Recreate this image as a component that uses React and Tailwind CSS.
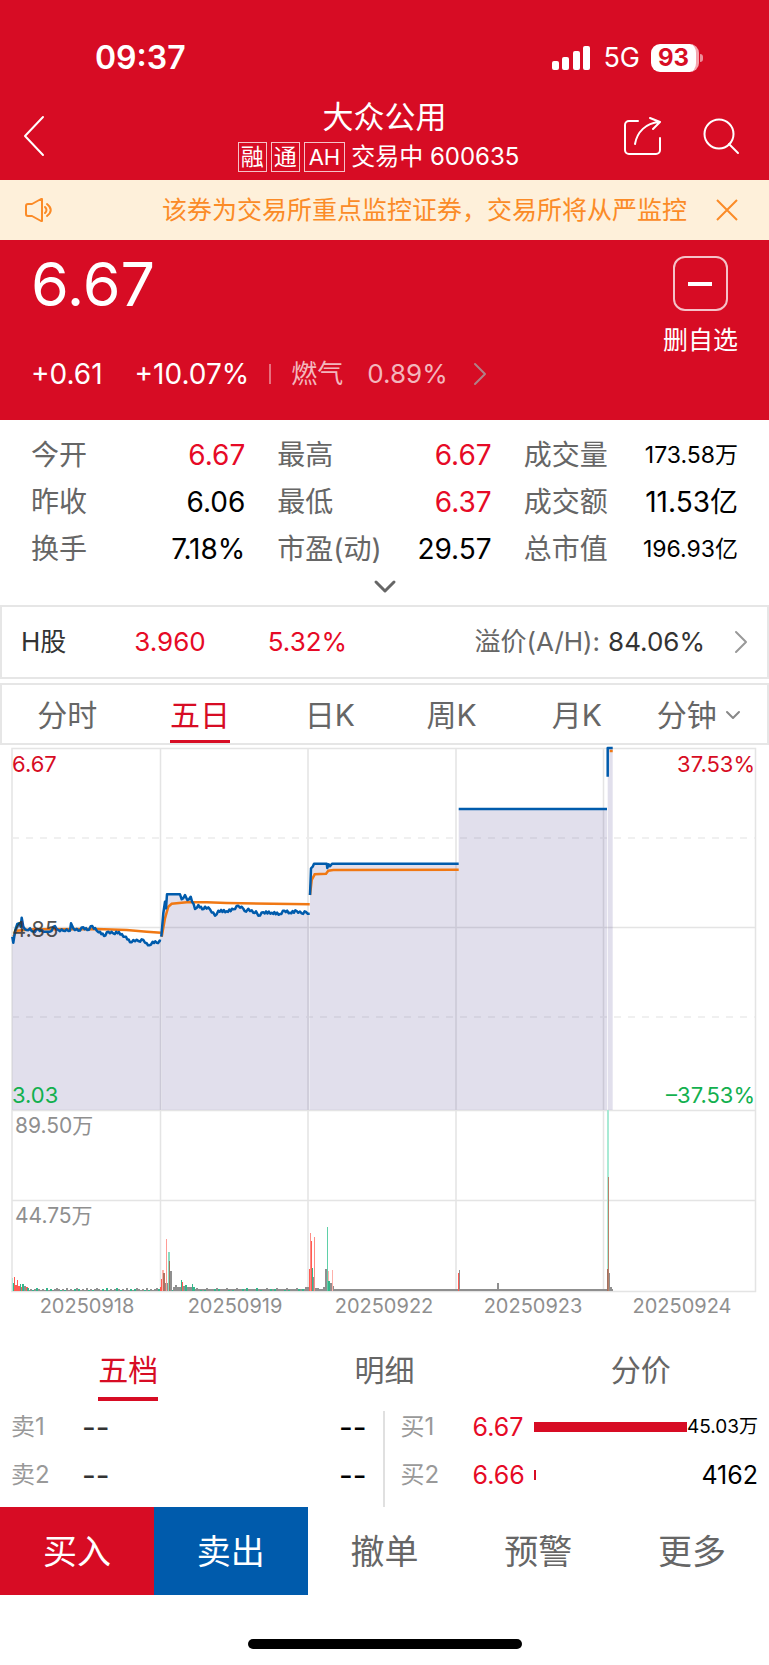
import React, { useState } from "react";

const stats = [
  { label: "今开", value: "6.67", up: true },
  { label: "最高", value: "6.67", up: true },
  { label: "成交量", value: "173.58万", small: true },
  { label: "昨收", value: "6.06" },
  { label: "最低", value: "6.37", up: true },
  { label: "成交额", value: "11.53亿" },
  { label: "换手", value: "7.18%" },
  { label: "市盈(动)", value: "29.57" },
  { label: "总市值", value: "196.93亿", small: true },
];

const periods = ["分时", "五日", "日K", "周K", "月K", "分钟"];
const bookTabs = ["五档", "明细", "分价"];

const asks = [
  { name: "卖1", price: "--", amount: "--" },
  { name: "卖2", price: "--", amount: "--" },
];

const bids = [
  { name: "买1", price: "6.67", amount: "45.03万", percent: 100, small: true },
  { name: "买2", price: "6.66", amount: "4162", percent: 1 },
];

const actions = [
  { name: "买入", style: "bg-[#d70c24] text-white" },
  { name: "卖出", style: "bg-[#005bac] text-white" },
  { name: "撤单", style: "bg-white text-[#666]" },
  { name: "预警", style: "bg-white text-[#666]" },
  { name: "更多", style: "bg-white text-[#666]" },
];

const dates = [
  { x: 87, label: "20250918" },
  { x: 235, label: "20250919" },
  { x: 384, label: "20250922" },
  { x: 533, label: "20250923" },
  { x: 682, label: "20250924" },
];

// one line per trading day, in thirds of a chart unit
const priceDays = [
  [[37, 590], [40, 608], [46, 570], [52, 552], [58, 550], [62, 560], [65, 533], [70, 560], [80, 570], [90, 565], [100, 575], [115, 568], [130, 575], [150, 575], [165, 558], [175, 570], [190, 572], [200, 568], [210, 572], [213, 550], [220, 565], [235, 572], [250, 562], [262, 570], [277, 558], [290, 572], [300, 575], [312, 588], [325, 575], [340, 580], [357, 576], [370, 590], [378, 590], [390, 607], [400, 600], [415, 603], [430, 600], [440, 610], [448, 616], [458, 605], [470, 608], [483, 603]],
  [[484, 590], [490, 520], [495, 485], [498, 505], [501, 463], [540, 463], [545, 478], [555, 465], [562, 480], [572, 470], [585, 507], [595, 495], [607, 508], [615, 500], [630, 508], [645, 527], [655, 512], [680, 514], [700, 508], [715, 497], [730, 506], [738, 515], [745, 506], [760, 518], [768, 514], [775, 527], [790, 517], [815, 518], [840, 522], [853, 512], [870, 518], [890, 513], [905, 520], [918, 516], [929, 521]],
  [[930, 465], [933, 385], [938, 380], [942, 371], [980, 371], [982, 384], [986, 373], [990, 379], [996, 371], [1376, 371]],
  [[1376, 207], [1821, 207]],
  [[1823, 110], [1823, 24], [1838, 24]],
];

const averageDays = [
  [[40, 590], [50, 572], [100, 568], [290, 567], [380, 570], [440, 575], [483, 578]],
  [[485, 590], [495, 535], [505, 500], [515, 491], [560, 487], [620, 487], [680, 489], [929, 493]],
  [[930, 465], [935, 420], [944, 403], [978, 401], [985, 392], [1000, 390], [1376, 389]],
  [[1829, 33], [1838, 33]],
];

const RED = "#ff5a52";
const GREEN = "#35b58a";
const GRAY = "#8f8f8f";
const PINK = "#ffb0aa";
const MINT = "#a9ead5";

// [x, height, width, colour]
const spikes = [
  [12, 13, 1, MINT], [13, 8, 1, GREEN], [14, 14, 1, RED], [15, 6, 2, RED], [17, 11, 1, RED], [18, 5, 2, RED], [20, 7, 1, GREEN], [21, 4, 2, RED], [22, 7, 2, GREEN], [24, 5, 2, GRAY], [26, 4, 2, RED], [27, 3, 2, GREEN],
  [160, 4, 2, RED], [161, 12, 2, RED], [162, 21, 2, PINK], [163, 18, 2, "#b0705f"], [165, 8, 2, GRAY], [166, 52, 1, "#ff9c96"], [167, 8, 2, GRAY], [168, 39, 2, "#8adcc1"], [169, 30, 1, "#a0705f"], [170, 20, 2, GRAY], [173, 4, 8, GRAY], [175, 6, 2, GRAY], [181, 11, 1, GREEN], [182, 9, 1, RED], [183, 5, 3, GRAY], [185, 6, 2, GREEN], [187, 4, 5, GRAY], [192, 7, 1, GREEN], [193, 4, 2, GREEN],
  [305, 4, 4, GRAY], [309, 22, 2, RED], [310, 58, 1, "#ff8c86"], [311, 50, 1, RED], [312, 23, 1, GREEN], [313, 14, 1, GRAY], [314, 54, 1, "#ff8c86"], [315, 3, 4, GRAY], [323, 4, 3, GRAY], [325, 22, 2, GRAY], [327, 64, 1, "#5fd0a8"], [328, 20, 1, PINK], [328, 10, 2, GREEN], [330, 8, 2, GRAY], [331, 5, 3, GRAY], [332, 21, 1, PINK],
  [458, 18, 1, RED], [459, 21, 1, GRAY], [497, 8, 2, GRAY],
  [607, 181, 2, MINT], [607, 22, 1, "#a07060"], [608, 114, 1, "#b98068"], [609, 18, 1, GRAY], [610, 4, 2, GRAY], [611, 2, 2, GRAY],
];

const quietVolume = Array.from({ length: 145 }, (_, i) => {
  const tones = [GRAY, RED, GREEN, GRAY, GREEN, GRAY, GRAY];
  return [16 + i * 2, 1 + ((i * 7) % 5 === 0 ? 2 : (i * 3) % 2), 2, tones[(i * i + i * 3) % 7]];
});

const line = (points) =>
  points.map(([x, y]) => `${(x / 3).toFixed(1)},${(y / 3 - 6).toFixed(1)}`).join(" ");

const wobble = (points) => {
  const out = [];
  points.forEach(([x, y], i) => {
    out.push([x, y]);
    const next = points[i + 1];
    if (!next || next[1] === y || next[0] - x < 8 || next[0] - x > 60) return;
    const steps = Math.floor((next[0] - x) / 4);
    for (let s = 1; s < steps; s++) {
      const t = s / steps;
      out.push([x + (next[0] - x) * t, y + (next[1] - y) * t + (s % 2 ? 3 : -3)]);
    }
  });
  return out;
};

const Chevron = ({ className, points, box, width = 2 }) => (
  <svg className={className} viewBox={box} fill="none" stroke="currentColor" strokeWidth={width} aria-hidden="true">
    <polyline points={points} strokeLinecap="round" strokeLinejoin="round" />
  </svg>
);

const StatusBar = () => (
  <div className="flex h-[92px] items-end justify-between pr-[66px] pb-4 pl-[95px] text-white">
    <span className="text-[32px] leading-9 font-semibold">09:37</span>
    <div className="flex h-9 items-center gap-[11px]">
      <svg className="h-6 w-10" viewBox="0 0 40 24" fill="currentColor" aria-hidden="true">
        <rect x="0" y="15" width="7" height="9" rx="2" />
        <rect x="10" y="11" width="7" height="13" rx="2" />
        <rect x="21" y="5" width="7" height="19" rx="2" />
        <rect x="31" y="0" width="7" height="24" rx="2" />
      </svg>
      <span className="text-[27px] leading-8">5G</span>
      <div className="flex items-center gap-px">
        <span className="flex h-7 w-12 items-center justify-center rounded-[9px] border-r-3 border-[#f3a5ae] bg-white text-2xl leading-7 font-bold text-[#d70c24]">
          93
        </span>
        <span className="h-2 w-[3px] rounded-r bg-[#ec8f9a]"></span>
      </div>
    </div>
  </div>
);

const Header = () => (
  <div className="grid h-[88px] grid-cols-[1fr_auto_1fr] items-center px-[23px] text-white">
    <button aria-label="返回" className="justify-self-start">
      <Chevron className="h-11 w-6" box="0 0 24 44" points="20,3 2,22 20,41" />
    </button>
    <div className="flex flex-col items-center pb-[2px]">
      <h1 className="text-[31px] leading-[44px]">大众公用</h1>
      <p className="flex items-center gap-1 pr-3 text-2xl leading-9">
        <span className="border border-[#f5c2c8] px-[2px] text-[23px] leading-7">融</span>
        <span className="border border-[#f5c2c8] px-[2px] text-[23px] leading-7">通</span>
        <span className="border border-[#f5c2c8] px-1 text-[22px] leading-7">AH</span>
        <span className="ml-[2px]">交易中 600635</span>
      </p>
    </div>
    <div className="flex items-center gap-10 justify-self-end pr-[6px]">
      <button aria-label="分享">
        <svg className="h-[38px] w-[38px]" viewBox="0 0 38 38" fill="none" stroke="currentColor" strokeWidth="2" strokeLinecap="round" strokeLinejoin="round">
          <path d="M14 4H5a4 4 0 0 0-4 4v25a4 4 0 0 0 4 4h27a4 4 0 0 0 4-4V21" />
          <path d="M11 27C13 15 22 6 35 5M26 1l10 4-7 7" />
        </svg>
      </button>
      <button aria-label="搜索">
        <svg className="h-[38px] w-[38px]" viewBox="0 0 38 38" fill="none" stroke="currentColor" strokeWidth="2" strokeLinecap="round">
          <circle cx="17" cy="17" r="14.5" />
          <path d="M27 27l9 9" />
        </svg>
      </button>
    </div>
  </div>
);

const Notice = () => (
  <div className="flex h-[60px] items-center bg-[#fef0da] pr-[30px] pl-6 text-[#fb8b27]">
    <svg className="h-7 w-7" viewBox="0 0 28 28" fill="none" stroke="currentColor" strokeWidth="2" strokeLinecap="round" strokeLinejoin="round" aria-hidden="true">
      <path d="M2 10a2 2 0 0 1 2-2h4l9-5h1v22h-1l-9-5H4a2 2 0 0 1-2-2z" />
      <path d="M21 11c2 2 2 4 0 6M23 8c5 4 5 8 0 12" />
    </svg>
    <p className="flex-1 text-right text-[25px] leading-8 whitespace-nowrap">
      该券为交易所重点监控证券，交易所将从严监控
    </p>
    <button aria-label="关闭" className="ml-7">
      <svg className="h-6 w-6" viewBox="0 0 24 24" fill="none" stroke="currentColor" strokeWidth="2">
        <path d="M2 2l20 20M22 2L2 22" />
      </svg>
    </button>
  </div>
);

const Quote = () => (
  <div className="flex h-[180px] justify-between px-[31px] pt-2 text-white">
    <div className="flex flex-col">
      <strong className="text-[61px] leading-[72px] font-normal">6.67</strong>
      <div className="mt-9 flex items-center text-[28px] leading-9">
        <span>+0.61</span>
        <span className="ml-8">+10.07%</span>
        <span className="ml-5 h-5 w-[2px] bg-[#e8707e]"></span>
        <a href="#industry" className="ml-5 flex items-center text-[26px] text-[#f3b6bd]">
          <span>燃气</span>
          <span className="ml-6">0.89%</span>
          <Chevron className="ml-6 h-6 w-4 text-[#b08088]" box="0 0 16 24" points="3,2 13,12 3,22" />
        </a>
      </div>
    </div>
    <button className="flex flex-col items-center pt-2 text-[25px] leading-9">
      <span className="flex h-[55px] w-[55px] items-center justify-center rounded-xl border-2 border-[#f5c2c8]">
        <span className="h-1 w-6 bg-white"></span>
      </span>
      <span className="mt-[11px]">删自选</span>
    </button>
  </div>
);

const Stats = () => (
  <div className="pt-[11px]">
    <dl className="grid grid-cols-3 gap-x-8 px-[31px]">
      {stats.map((item) => (
        <div key={item.label} className="flex h-[47px] items-center justify-between whitespace-nowrap">
          <dt className="text-[28px] leading-10 text-[#666]">{item.label}</dt>
          <dd
            className={`leading-10 ${item.small ? "text-[23px]" : "text-[28px]"} ${
              item.up ? "text-[#e60a26]" : "text-black"
            }`}
          >
            {item.value}
          </dd>
        </div>
      ))}
    </dl>
    <button aria-label="展开" className="mx-auto flex h-[33px] items-center justify-center">
      <Chevron className="mb-1 h-4 w-6 text-[#666]" box="0 0 24 16" points="3,3 12,12 21,3" width={3} />
    </button>
  </div>
);

const HShare = () => (
  <a href="#hshare" className="flex h-[74px] items-center border-2 border-[#e6e6e6] pr-[18px] pl-[19px] text-[26px] leading-9">
    <span className="text-[#333]">H股</span>
    <span className="ml-[68px] text-[#e60a26]">3.960</span>
    <span className="ml-[62px] text-[#e60a26]">5.32%</span>
    <span className="ml-auto text-[#666]">溢价(A/H):</span>
    <span className="ml-2 text-[#333]">84.06%</span>
    <Chevron className="ml-7 h-6 w-4 text-[#999]" box="0 0 16 24" points="3,2 13,12 3,22" />
  </a>
);

const PeriodTabs = () => {
  const [active, setActive] = useState("五日");
  return (
    <div className="mt-1 grid h-[62px] grid-cols-[131fr_136fr_125fr_120fr_132fr_113fr] border-2 border-[#e6e6e6] pr-3 text-[30px] leading-10">
      {periods.map((item) => (
        <button key={item} onClick={() => setActive(item)} className="flex justify-center whitespace-nowrap">
          <span
            className={`flex h-[58px] items-center gap-2 border-b-3 pt-1 ${
              item === active ? "border-[#d70c24] text-[#d70c24]" : "border-transparent text-[#666]"
            }`}
          >
            {item}
            {item === "分钟" && (
              <Chevron className="h-3 w-4 text-[#888]" box="0 0 16 12" points="2,3 8,9 14,3" />
            )}
          </span>
        </button>
      ))}
    </div>
  );
};

const Chart = () => (
  <svg className="mt-px block w-full" viewBox="0 0 769 580" role="img" aria-label="五日走势">
    <g stroke="#e4e4e4" strokeWidth="1.5" fill="none">
      <path d="M12 2.5H755.5V545.5H12ZM12 181.5H755.5M12 364.5H755.5M12 454.5H755.5" />
      <path d="M160.5 2V545M308 2V545M456 2V545M603.5 2V545" />
      <path d="M12 92H755M12 271H755" strokeDasharray="7 7" stroke="#ebebeb" />
    </g>
    {priceDays.map((day, i) => (
      <polygon
        key={i}
        points={`${line([[day[0][0], 1110]])} ${line(day)} ${line([[day[day.length - 1][0], 1110]])}`}
        fill="#6a5da0"
        fillOpacity="0.2"
      />
    ))}
    {averageDays.map((day, i) => (
      <polyline key={i} points={line(day)} fill="none" stroke="#f07814" strokeWidth="2.5" />
    ))}
    {priceDays.map((day, i) => (
      <polyline key={i} points={line(wobble(day))} fill="none" stroke="#005bac" strokeWidth="2.5" strokeLinejoin="round" />
    ))}
    <g>
      <rect x="200" y="543" width="411" height="2" fill={GRAY} />
      {[...quietVolume, ...spikes].map(([x, h, w, color], i) => (
        <rect key={i} x={x} y={545 - h} width={w} height={h} fill={color} />
      ))}
    </g>
    <g fontSize="22">
      <text x="12" y="26" fill="#d70c24">6.67</text>
      <text x="755" y="26" textAnchor="end" fill="#d70c24">37.53%</text>
      <text x="12" y="191" fill="#333" fillOpacity="0.85">4.85</text>
      <text x="12" y="357" fill="#12b04f">3.03</text>
      <text x="755" y="357" textAnchor="end" fill="#12b04f">–37.53%</text>
    </g>
    <g fontSize="21" fill="#8f8f8f">
      <text x="15" y="387">89.50万</text>
      <text x="15" y="477">44.75万</text>
    </g>
    <g fontSize="20" fill="#8f8f8f" textAnchor="middle">
      {dates.map((date) => (
        <text key={date.label} x={date.x} y="567">{date.label}</text>
      ))}
    </g>
  </svg>
);

const OrderBook = () => {
  const [active, setActive] = useState("五档");
  return (
    <div>
      <div className="grid h-[85px] grid-cols-3 pt-4 text-[30px] leading-10">
        {bookTabs.map((item) => (
          <button key={item} onClick={() => setActive(item)} className="flex justify-center">
            <span
              className={`flex h-[59px] items-center border-b-4 ${
                item === active ? "border-[#d70c24] text-[#d70c24]" : "border-transparent text-[#666]"
              }`}
            >
              {item}
            </span>
          </button>
        ))}
      </div>
      <div className="grid h-24 grid-cols-2 text-[25px] whitespace-nowrap">
        <table className="h-24 w-full table-fixed border-r-2 border-[#e0e0e0]">
          <tbody>
            {asks.map((row) => (
              <tr key={row.name} className="h-12">
                <th className="w-[82px] pb-4 pl-[11px] text-left text-2xl leading-7 font-normal text-[#999]">{row.name}</th>
                <td className="pb-4 text-[30px] leading-7 text-[#333]">{row.price}</td>
                <td className="pr-4 pb-4 text-right text-[30px] leading-7 text-black">{row.amount}</td>
              </tr>
            ))}
          </tbody>
        </table>
        <table className="h-24 w-full table-fixed">
          <tbody>
            {bids.map((row) => (
              <tr key={row.name} className="h-12">
                <th className="w-[88px] pb-4 pl-4 text-left text-2xl leading-7 font-normal text-[#999]">{row.name}</th>
                <td className="w-[61px] pb-4 leading-7 text-[#e60a26]">{row.price}</td>
                <td className="pb-4">
                  <div className="h-[10px] min-w-[2px] bg-[#d70c24]" style={{ width: `${row.percent}%` }}></div>
                </td>
                <td className={`w-[82px] pr-[11px] pb-4 text-right leading-7 text-black ${row.small ? "text-[19px]" : ""}`}>
                  {row.amount}
                </td>
              </tr>
            ))}
          </tbody>
        </table>
      </div>
    </div>
  );
};

const App = () => {
  return (
    <div className="min-h-screen w-full bg-white font-['Inter','Noto_Sans_CJK_SC',sans-serif]">
      <header className="bg-[#d70c24]">
        <StatusBar />
        <Header />
        <Notice />
        <Quote />
      </header>
      <main>
        <Stats />
        <HShare />
        <PeriodTabs />
        <Chart />
        <OrderBook />
      </main>
      <footer>
        <nav className="grid grid-cols-5">
          {actions.map((item) => (
            <button key={item.name} className={`h-[88px] pt-[2px] text-[34px] leading-10 ${item.style}`}>
              {item.name}
            </button>
          ))}
        </nav>
        <div className="flex h-[70px] items-end justify-center pb-4">
          <span className="h-[10px] w-[274px] rounded-full bg-black"></span>
        </div>
      </footer>
    </div>
  );
};

export default App;
